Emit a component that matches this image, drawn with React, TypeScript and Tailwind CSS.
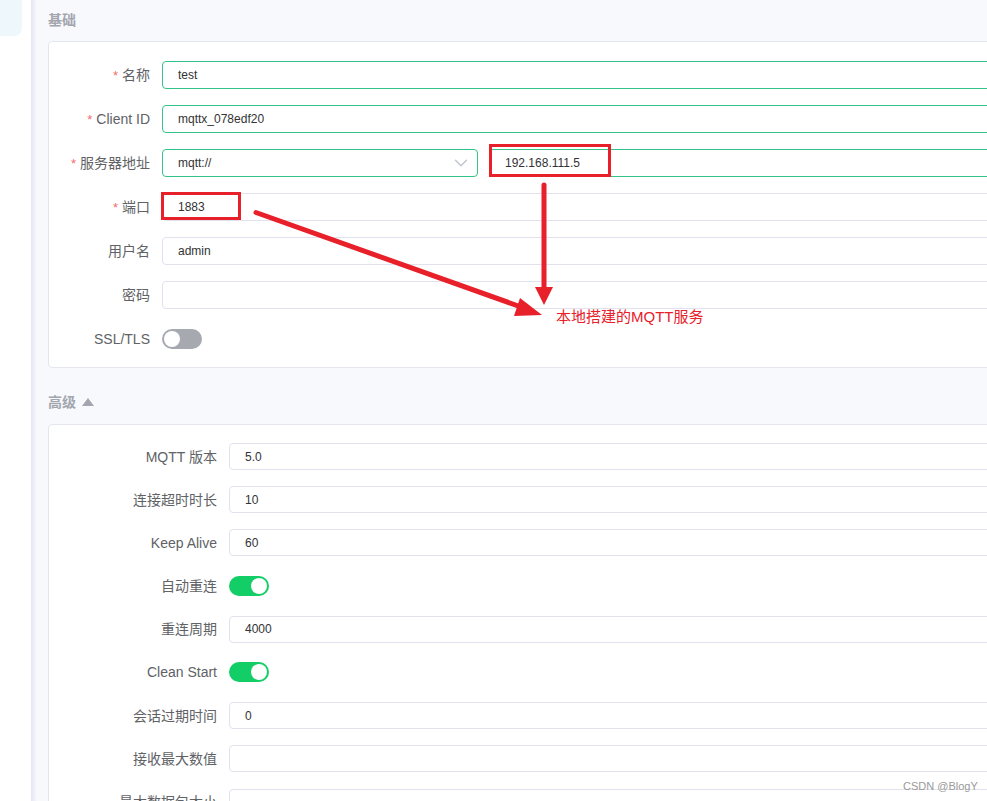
import React from "react";
import { ChevronDown } from "lucide-react";

const FONT = { fontFamily: '"Liberation Sans", "Noto Sans CJK SC", sans-serif' };

function Label({ text, req, w }: { text: string; req?: boolean; w: string }) {
  return (
    <div className={`${w} shrink-0 pr-[12px] text-right text-[14px] text-[#606266] leading-none`}>
      {req && <span className="text-[#f56c6c] mr-[4px] text-[13px]">*</span>}
      {text}
    </div>
  );
}

function Input({ value, green, h }: { value?: string; green?: boolean; h: string }) {
  return (
    <div
      className={`flex-1 ${h} rounded-[4px] border ${
        green ? "border-[#34c388]" : "border-[#e1e2ed]"
      } bg-white flex items-center pl-[15px] text-[12px] text-[#333]`}
    >
      {value}
    </div>
  );
}

function Toggle({ on }: { on?: boolean }) {
  return (
    <div
      className={`w-[40px] h-[20px] rounded-full flex items-center px-[2px] ${
        on ? "bg-[#13ce66] justify-end" : "bg-[#a6a9b0] justify-start"
      }`}
    >
      <div className="w-[16px] h-[16px] rounded-full bg-white" />
    </div>
  );
}

export default function App() {
  const basic = [
    { l: "名称", req: true, v: "test", g: true },
    { l: "Client ID", req: true, v: "mqttx_078edf20", g: true },
  ];
  const adv: { l: string; v?: string; t?: boolean }[] = [
    { l: "MQTT 版本", v: "5.0" },
    { l: "连接超时时长", v: "10" },
    { l: "Keep Alive", v: "60" },
    { l: "自动重连", t: true },
    { l: "重连周期", v: "4000" },
    { l: "Clean Start", t: true },
    { l: "会话过期时间", v: "0" },
    { l: "接收最大数值", v: "" },
    { l: "最大数据包大小", v: "" },
  ];
  return (
    <div className="relative w-[987px] h-[801px] overflow-hidden flex bg-[#f8f9fd]" style={FONT}>
      {/* sidebar */}
      <div className="w-[31px] shrink-0 bg-white">
        <div className="w-[22px] h-[36px] bg-[#eef7fb] rounded-br-[8px]" />
      </div>
      <div className="w-[6px] shrink-0 bg-gradient-to-r from-[#e4e5f3] to-[#f8f9fd]" />
      {/* main */}
      <div className="flex-1 pl-[11px] flex flex-col">
        <div className="shrink-0 h-[41px] flex items-center text-[14px] font-semibold text-[#a3a6ae]">基础</div>
        <div className="shrink-0 w-[980px] bg-white border border-[#e4e6ef] rounded-[4px] pt-[19px] pb-[14px] pr-[20px] flex flex-col gap-[16px]">
          {basic.map((r) => (
            <div key={r.l} className="flex items-center">
              <Label text={r.l} req={r.req} w="w-[113px]" />
              <Input value={r.v} green={r.g} h="h-[28px]" />
            </div>
          ))}
          <div className="flex items-center">
            <Label text="服务器地址" req w="w-[113px]" />
            <div className="w-[316px] h-[28px] rounded-[4px] border border-[#34c388] bg-white flex items-center justify-between pl-[15px] pr-[5px] text-[12px] text-[#333]">
              <span>mqtt://</span>
              <ChevronDown size={22} strokeWidth={1.5} color="#c0c4cc" />
            </div>
            <div className="w-[11px]" />
            <Input value="192.168.111.5" green h="h-[28px]" />
          </div>
          <div className="flex items-center">
            <Label text="端口" req w="w-[113px]" />
            <Input value="1883" h="h-[28px]" />
          </div>
          <div className="flex items-center">
            <Label text="用户名" w="w-[113px]" />
            <Input value="admin" h="h-[28px]" />
          </div>
          <div className="flex items-center">
            <Label text="密码" w="w-[113px]" />
            <Input value="" h="h-[28px]" />
          </div>
          <div className="flex items-center h-[28px]">
            <Label text="SSL/TLS" w="w-[113px]" />
            <Toggle />
          </div>
        </div>
        <div className="shrink-0 pt-[23px] pb-[11px] h-[56px] flex items-center gap-[6px] text-[14px] font-semibold text-[#a3a6ae]">
          <span>高级</span>
          <svg width="12" height="8" viewBox="0 0 12 8">
            <polygon points="6,0 12,8 0,8" fill="#a3a6ae" />
          </svg>
        </div>
        <div className="shrink-0 w-[980px] bg-white border border-[#e4e6ef] rounded-[4px] pt-[18px] pb-[18px] pr-[20px] flex flex-col gap-[16.2px]">
          {adv.map((r) => (
            <div key={r.l} className="flex items-center h-[27px]">
              <Label text={r.l} w="w-[180px]" />
              {r.t ? <Toggle on /> : <Input value={r.v} h="h-[27px]" />}
            </div>
          ))}
        </div>
      </div>

      {/* annotations */}
      <div className="absolute left-[161px] top-[192px] w-[80px] h-[28px] border-[3px] border-[#e8202a]" />
      <div className="absolute left-[489px] top-[144px] w-[122px] h-[33px] border-[3px] border-[#e8202a]" />
      <svg className="absolute left-0 top-0" width="987" height="801" viewBox="0 0 987 801">
        <line x1="256" y1="212.5" x2="524" y2="308" stroke="#e8202a" strokeWidth="5" strokeLinecap="round" />
        <polygon points="542,315 520,298 514,316" fill="#e8202a" />
        <line x1="544" y1="185" x2="544" y2="290" stroke="#e8202a" strokeWidth="5" strokeLinecap="round" />
        <polygon points="535,287 553,287 544,305" fill="#e8202a" />
      </svg>
      <div className="absolute left-[556px] top-[307px] text-[15px] leading-[20px] text-[#e8202a]">本地搭建的MQTT服务</div>
      <div className="absolute left-[903px] top-[779px] text-[11px] leading-[14px] text-[#9a9a9a]">CSDN @BlogY</div>
    </div>
  );
}
